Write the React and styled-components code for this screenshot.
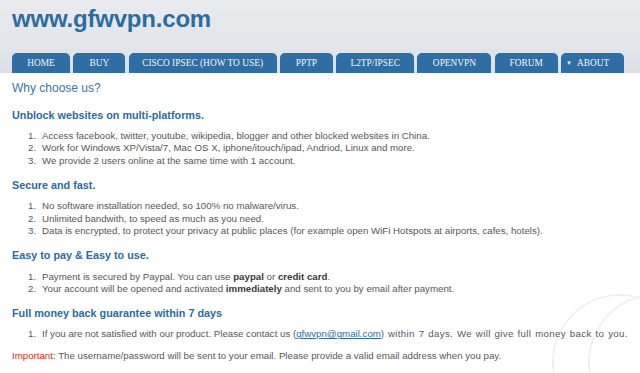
import React from 'react';
import styled, { createGlobalStyle } from 'styled-components';

const GlobalStyle = createGlobalStyle`
  html, body {
    margin: 0;
    padding: 0;
    background: #ffffff;
    overflow: hidden;
  }
  body {
    font-family: "Liberation Sans", Arial, sans-serif;
  }
`;

const tabs = [
  { label: 'HOME', w: 58 },
  { label: 'BUY', w: 52 },
  { label: 'CISCO IPSEC (HOW TO USE)', w: 148 },
  { label: 'PPTP', w: 53 },
  { label: 'L2TP/IPSEC', w: 78 },
  { label: 'OPENVPN', w: 74 },
  { label: 'FORUM', w: 63 },
  { label: 'ABOUT', w: 63, menu: true },
];

const App = () => {
  return (
    <Page>
      <GlobalStyle />
      <Header>
        <Logo>www.gfwvpn.com</Logo>
        <Nav>
          {tabs.map((t) => (
            <Tab key={t.label} $w={t.w} $menu={t.menu}>
              {t.menu && <Caret>▼</Caret>}
              {t.label}
            </Tab>
          ))}
        </Nav>
      </Header>

      <Content>
        <Title>Why choose us?</Title>

        <Heading $first>Unblock websites on multi-platforms.</Heading>
        <List>
          <Item>Access facebook, twitter, youtube, wikipedia, blogger and other blocked websites in China.</Item>
          <Item>Work for Windows XP/Vista/7, Mac OS X, iphone/itouch/ipad, Andriod, Linux and more.</Item>
          <Item>We provide 2 users online at the same time with 1 account.</Item>
        </List>

        <Heading>Secure and fast.</Heading>
        <List>
          <Item>No software installation needed, so 100% no malware/virus.</Item>
          <Item>Unlimited bandwith, to speed as much as you need.</Item>
          <Item>Data is encrypted, to protect your privacy at public places (for example open WiFi Hotspots at airports, cafes, hotels).</Item>
        </List>

        <Heading>Easy to pay &amp; Easy to use.</Heading>
        <List>
          <Item>Payment is secured by Paypal. You can use <b>paypal</b> or <b>credit card</b>.</Item>
          <Item>Your account will be opened and activated <b>immediately</b> and sent to you by email after payment.</Item>
        </List>

        <Heading>Full money back guarantee within 7 days</Heading>
        <List>
          <Item>
            If you are not satisfied with our product. Please contact us (<Mail href="#">gfwvpn@gmail.com</Mail>)
            <Wide> within 7 days. We will give full money back to you.</Wide>
          </Item>
        </List>

        <Note>
          <Warn>Important</Warn>: The username/password will be sent to your email. Please provide a valid email address when you pay.
        </Note>
      </Content>
    </Page>
  );
};

// Styled-components

const Page = styled.div`
  width: 640px;
  height: 373px;
  overflow: hidden;
  background:
    radial-gradient(circle at 620px 362px, transparent 66px, #efefef 66.5px, #efefef 67.5px, transparent 68px),
    radial-gradient(circle at 656px 362px, transparent 66px, #efefef 66.5px, #efefef 67.5px, transparent 68px),
    #ffffff;
`;

const Header = styled.div`
  height: 73px;
  box-sizing: border-box;
  padding: 5px 0 0 12px;
  background: linear-gradient(to bottom, #e9ebee 0%, #e2e5e9 60%, #dde1e6 100%);
  display: flex;
  flex-direction: column;
`;

const Logo = styled.div`
  font-size: 24px;
  line-height: 28px;
  font-weight: bold;
  color: #2b6da3;
  letter-spacing: -0.2px;
`;

const Nav = styled.div`
  margin-top: auto;
  display: flex;
  gap: 3.3px;
`;

const Tab = styled.div`
  width: ${(p) => p.$w}px;
  height: 20px;
  box-sizing: border-box;
  display: flex;
  align-items: center;
  justify-content: ${(p) => (p.$menu ? 'flex-start' : 'center')};
  padding-left: ${(p) => (p.$menu ? '5px' : '0')};
  background: #2f6ea5;
  border-radius: 5px 5px 0 0;
  color: #f2f5f9;
  font-family: "Liberation Serif", "Times New Roman", serif;
  font-size: 9.4px;
  white-space: nowrap;
`;

const Caret = styled.span`
  font-size: 6px;
  margin-right: 5px;
`;

const Content = styled.div`
  padding: 0 12px;
  color: #575757;
  font-size: 9.7px;
`;

const Title = styled.div`
  margin-top: 7.5px;
  font-size: 12px;
  line-height: 15px;
  color: #3a74a9;
`;

const Heading = styled.div`
  margin-top: ${(p) => (p.$first ? '12px' : '10.3px')};
  font-size: 10.8px;
  line-height: 14px;
  font-weight: bold;
  color: #2c6ba1;
`;

const List = styled.ol`
  margin: 8.3px 0 0 0;
  padding: 0 0 0 30px;
  list-style: none;
  counter-reset: item;
`;

const Item = styled.li`
  counter-increment: item;
  line-height: 12.6px;
  white-space: nowrap;
  position: relative;

  &::before {
    content: counter(item) ".";
    position: absolute;
    left: -14px;
  }

  b {
    color: #3a3a3a;
  }
`;

const Wide = styled.span`
  letter-spacing: 0.35px;
  word-spacing: 0.8px;
`;

const Mail = styled.a`
  color: #2b6da3;
  text-decoration: underline;
`;

const Note = styled.div`
  margin-top: 8.5px;
  line-height: 13px;
  white-space: nowrap;
`;

const Warn = styled.span`
  color: #e3231b;
`;

export default App;
